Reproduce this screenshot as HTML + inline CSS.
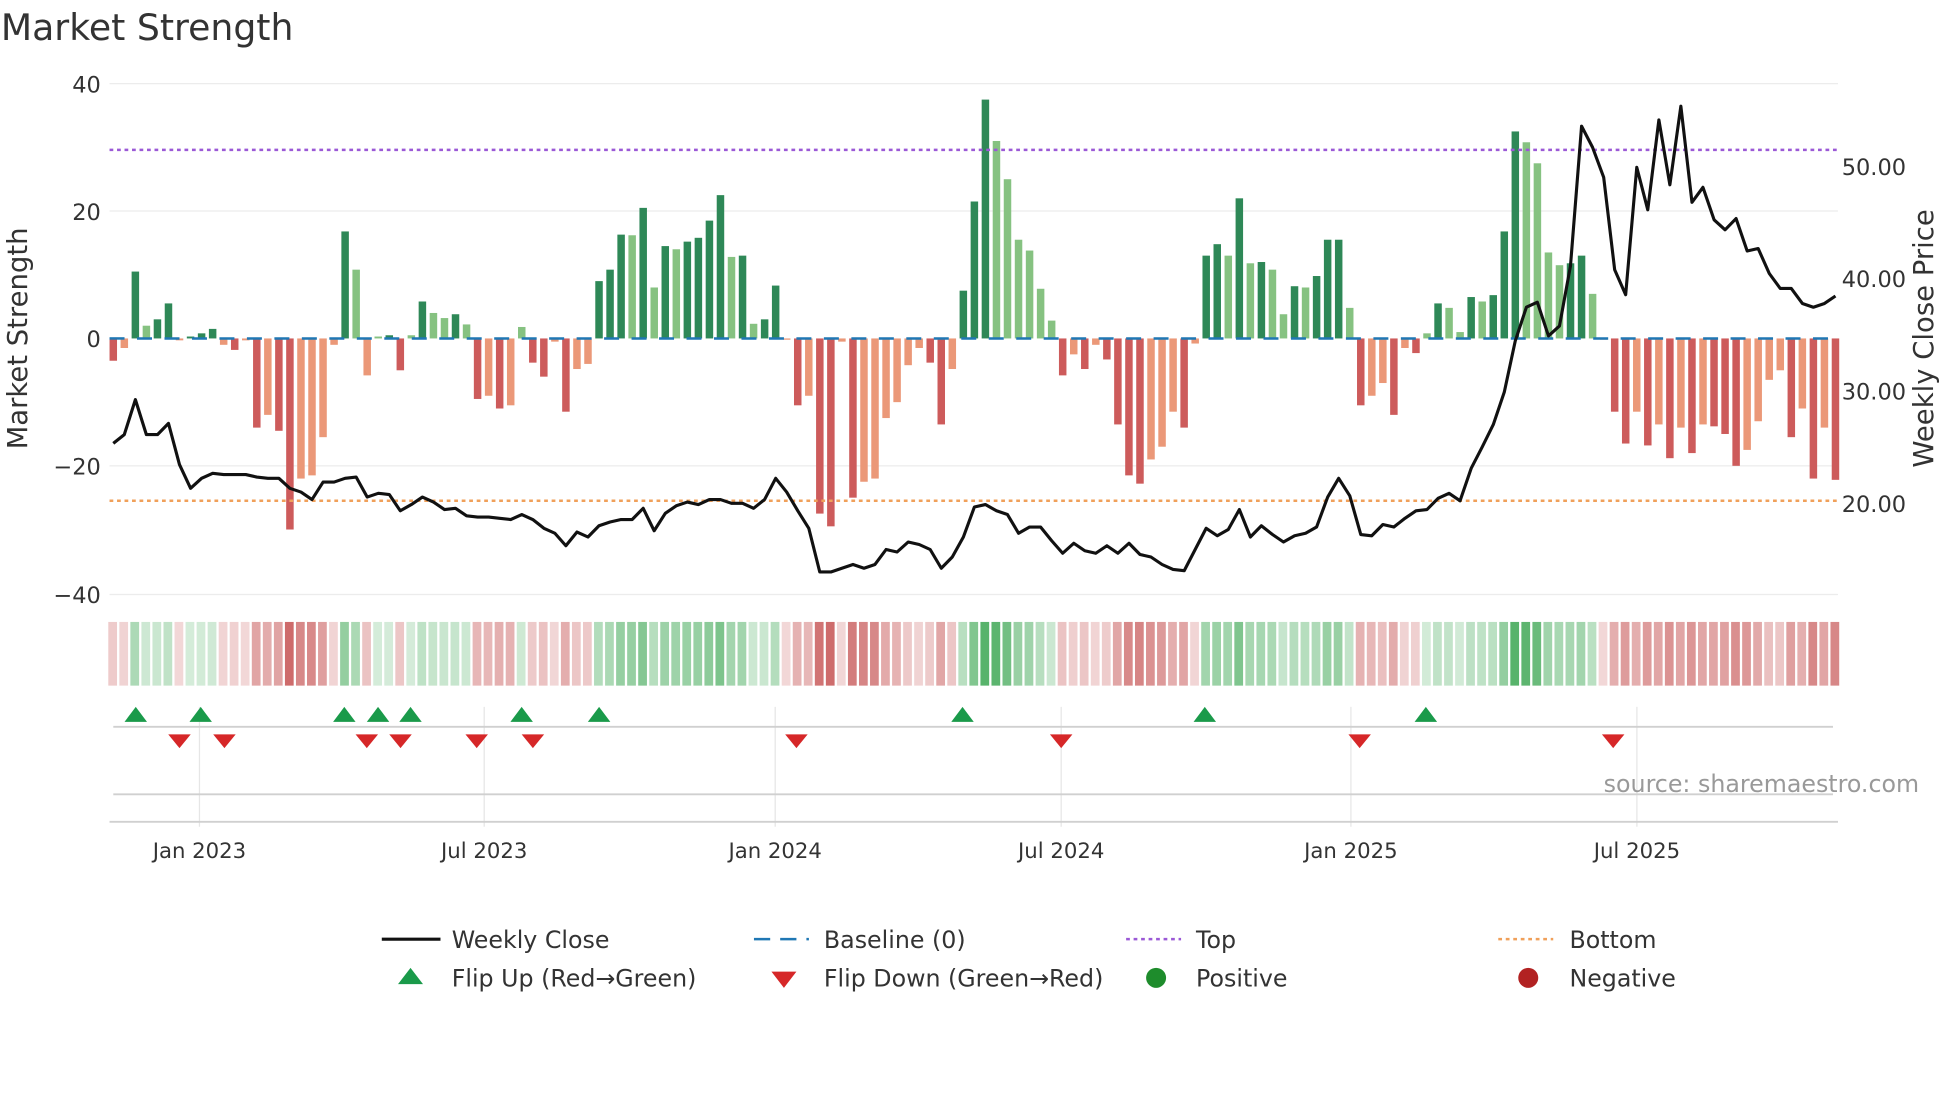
<!DOCTYPE html>
<html><head><meta charset="utf-8"><style>
html,body{margin:0;padding:0;background:#fff;}
svg{display:block;font-family:"DejaVu Sans","Liberation Sans",sans-serif;}
</style></head><body>
<svg id="s" width="1960" height="1102" viewBox="0 0 1568 882.4" xmlns="http://www.w3.org/2000/svg">
<rect width="1568" height="883" fill="#fff"/>
<text x="0" y="32" font-size="29" fill="#333">Market Strength</text>
<g stroke="#ececec" stroke-width="1">
<line x1="87" x2="1471" y1="67" y2="67"/><line x1="87" x2="1471" y1="169" y2="169"/>
<line x1="87" x2="1471" y1="373" y2="373"/><line x1="87" x2="1471" y1="476" y2="476"/>
</g>
<g font-size="18" fill="#333">
<text x="80" y="74" text-anchor="end">40</text><text x="80" y="176" text-anchor="end">20</text>
<text x="80" y="278" text-anchor="end">0</text><text x="80" y="380" text-anchor="end">−20</text>
<text x="80" y="483" text-anchor="end">−40</text>
<text x="1474" y="140">50.00</text><text x="1474" y="230">40.00</text>
<text x="1474" y="320">30.00</text><text x="1474" y="410">20.00</text>
<text transform="translate(21,271) rotate(-90)" text-anchor="middle" font-size="22">Market Strength</text>
<text transform="translate(1547,271) rotate(-90)" text-anchor="middle" font-size="22">Weekly Close Price</text>
</g>
<g id="bars"></g>
<line x1="87" x2="1471" y1="271" y2="271" stroke="#1f77b4" stroke-width="2" stroke-dasharray="12,10"/>
<line x1="87" x2="1471" y1="120" y2="120" stroke="#9b59d6" stroke-width="2" stroke-dasharray="3,3"/>
<line x1="87" x2="1471" y1="401" y2="401" stroke="#f0a05a" stroke-width="2" stroke-dasharray="3,3"/>
<polyline id="price" fill="none" stroke="#111" stroke-width="2.5" stroke-linejoin="round"/>
<g id="strip"></g>
<g stroke="#e6e6e6" stroke-width="1">
<line x1="159" x2="159" y1="566" y2="662"/><line x1="387" x2="387" y1="566" y2="662"/>
<line x1="620" x2="620" y1="566" y2="662"/><line x1="849" x2="849" y1="566" y2="662"/>
<line x1="1081" x2="1081" y1="566" y2="662"/><line x1="1310" x2="1310" y1="566" y2="662"/>
</g>
<line x1="90" x2="1467" y1="582" y2="582" stroke="#d0d0d0" stroke-width="1.5"/>
<line x1="90" x2="1467" y1="636" y2="636" stroke="#d0d0d0" stroke-width="1.5"/>
<line x1="87" x2="1471" y1="658" y2="658" stroke="#d0d0d0" stroke-width="1.5"/>
<g id="flips"></g>
<text x="1536" y="634" text-anchor="end" font-size="19" fill="#999">source: sharemaestro.com</text>
<g font-size="17" fill="#333" text-anchor="middle">
<text x="159" y="687">Jan 2023</text><text x="387" y="687">Jul 2023</text>
<text x="620" y="687">Jan 2024</text><text x="849" y="687">Jul 2024</text>
<text x="1081" y="687">Jan 2025</text><text x="1310" y="687">Jul 2025</text>
</g>
<g font-size="19" fill="#333">
<line x1="305" x2="352" y1="752" y2="752" stroke="#111" stroke-width="2.5"/><text x="361" y="759">Weekly Close</text>
<line x1="603" x2="647" y1="752" y2="752" stroke="#1f77b4" stroke-width="2" stroke-dasharray="13,8"/><text x="659" y="759">Baseline (0)</text>
<line x1="901" x2="945" y1="752" y2="752" stroke="#9b59d6" stroke-width="2" stroke-dasharray="3,3"/><text x="957" y="759">Top</text>
<line x1="1199" x2="1243" y1="752" y2="752" stroke="#f0a05a" stroke-width="2" stroke-dasharray="3,3"/><text x="1256" y="759">Bottom</text>
<polygon points="318,788 338,788 328,775" fill="#1a9a4a"/><text x="361" y="790">Flip Up (Red→Green)</text>
<polygon points="617,778 637,778 627,791" fill="#d62728"/><text x="659" y="790">Flip Down (Green→Red)</text>
<circle cx="925" cy="783" r="8" fill="#1e8c2c"/><text x="957" y="790">Positive</text>
<circle cx="1223" cy="783" r="8" fill="#b22222"/><text x="1256" y="790">Negative</text>
</g>
</svg>
<script>
var v=[-3.5,-1.5,10.5,2,3,5.5,-0.3,0.3,0.8,1.5,-1,-1.8,-0.3,-14,-12,-14.5,-30,-22,-21.5,-15.5,-1,16.8,10.8,-5.8,0.3,0.5,-5,0.5,5.8,4,3.2,3.8,2.2,-9.5,-9,-11,-10.5,1.8,-3.8,-6,-0.5,-11.5,-4.8,-4,9,10.8,16.3,16.2,20.5,8,14.5,14,15.2,15.8,18.5,22.5,12.8,13,2.3,3,8.3,-0.2,-10.5,-9,-27.5,-29.5,-0.5,-25,-22.5,-22,-12.5,-10,-4.2,-1.5,-3.8,-13.5,-4.8,7.5,21.5,37.5,31,25,15.5,13.8,7.8,2.8,-5.8,-2.5,-4.8,-1,-3.3,-13.5,-21.5,-22.8,-19,-17,-11.5,-14,-0.8,13,14.8,13,22,11.8,12,10.8,3.8,8.2,8,9.8,15.5,15.5,4.8,-10.5,-9,-7,-12,-1.5,-2.3,0.8,5.5,4.8,1,6.5,5.8,6.8,16.8,32.5,30.8,27.5,13.5,11.5,11.8,13,7,-0.2,-11.5,-16.5,-11.5,-16.8,-13.5,-18.8,-14,-18,-13.5,-13.8,-15,-20,-17.5,-13,-6.5,-5,-15.5,-11,-22,-14,-22.2];
var py=[355,348,320,348,348,339,372,391,383,379,380,380,380,382,383,383,391,394,400,386,386,383,382,398,395,396,409,404,398,402,408,407,413,414,414,415,416,412,416,423,427,437,426,430,421,418,416,416,407,425,411,405,402,404,400,400,403,403,407,400,383,394,409,423,458,458,455,452,455,452,440,442,434,436,440,455,446,430,406,404,409,412,427,422,422,433,443,435,441,443,437,443,435,444,446,452,456,457,440,423,429,424,408,430,421,428,434,429,427,422,398,383,397,428,429,420,422,415,409,408,399,395,401,375,358,340,314,273,246,242,269,261,213,101,118,142,216,236,134,168,96,148,85,162,150,176,184,175,201,199,219,231,231,243,246,243,237];
var n=v.length,dx=(1469-90)/(n-1),b='',s='',pts=[];
for(var i=0;i<n;i++){var x=90+i*dx,val=v[i],h=Math.abs(val)*5.1;
var prev=i?Math.abs(v[i-1]):0,inc=Math.abs(val)>=prev;
var c=val>=0?(inc?'#2e8857':'#86c281'):(inc?'#cd5b5b':'#eb9878');
if(val>=0)b+='<rect x="'+(x-3)+'" y="'+(271-h)+'" width="6" height="'+h+'" fill="'+c+'"/>';
else b+='<rect x="'+(x-3)+'" y="271" width="6" height="'+h+'" fill="'+c+'"/>';
var t=Math.min(1,Math.abs(val)/32),a=0.2+0.6*t;
var sc=val>=0?'rgba(46,160,70,'+a+')':'rgba(190,60,60,'+a+')';
s+='<rect x="'+(x-4)+'" y="498" width="7" height="51" fill="'+sc+'"/>';
pts.push(x.toFixed(1)+','+(i<py.length?py[i]:py[py.length-1]));}
document.getElementById('bars').innerHTML=b;
document.getElementById('strip').innerHTML=s;
document.getElementById('price').setAttribute('points',pts.join(' '));
var f='',up=[108,160,275,302,328,417,479,770,964,1141],dn=[143,179,293,320,381,426,637,849,1088,1291];
up.forEach(function(x){f+='<polygon points="'+(x-9)+',578 '+(x+9)+',578 '+x+',566" fill="#1a9a4a"/>';});
dn.forEach(function(x){f+='<polygon points="'+(x-9)+',588 '+(x+9)+',588 '+x+',599" fill="#d62728"/>';});
document.getElementById('flips').innerHTML=f;
</script>
</body></html>
